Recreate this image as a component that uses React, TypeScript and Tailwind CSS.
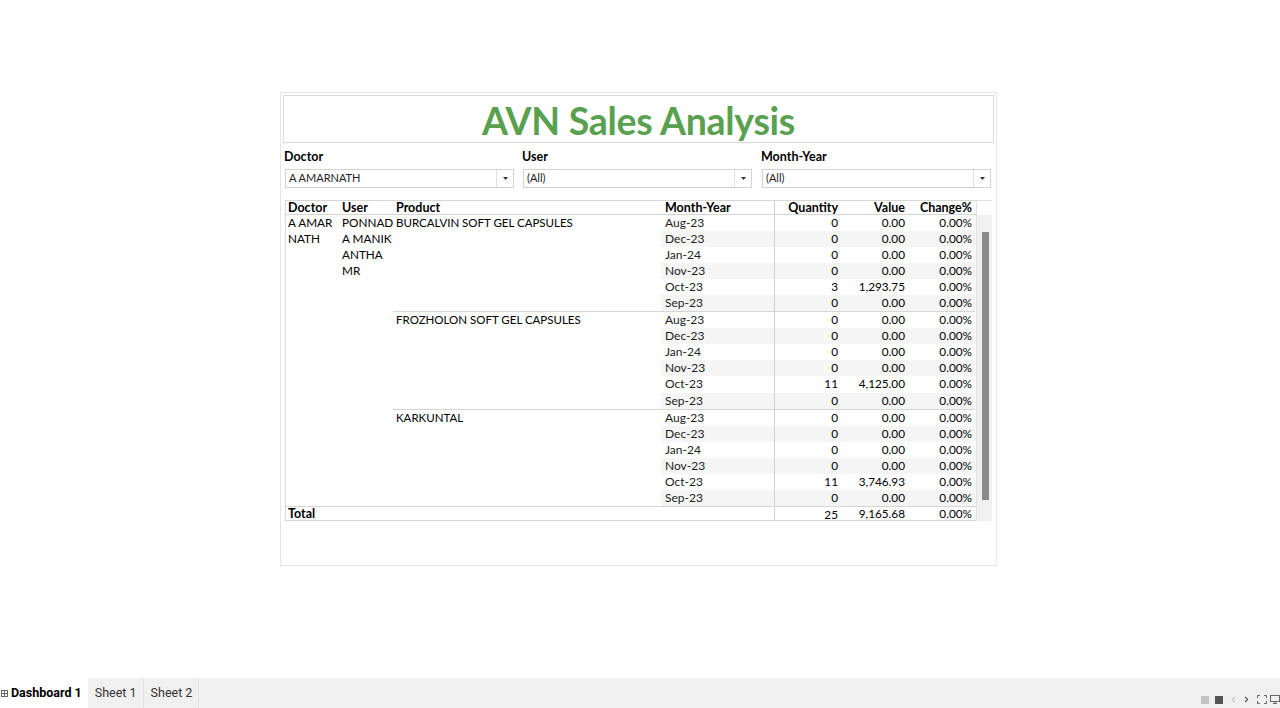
import { ChevronLeft, ChevronRight } from 'lucide-react';

const months = ['Aug-23', 'Dec-23', 'Jan-24', 'Nov-23', 'Oct-23', 'Sep-23'];

const products = [
  { name: 'BURCALVIN SOFT GEL CAPSULES', qty: [0, 0, 0, 0, 3, 0], value: ['0.00', '0.00', '0.00', '0.00', '1,293.75', '0.00'] },
  { name: 'FROZHOLON SOFT GEL CAPSULES', qty: [0, 0, 0, 0, 11, 0], value: ['0.00', '0.00', '0.00', '0.00', '4,125.00', '0.00'] },
  { name: 'KARKUNTAL', qty: [0, 0, 0, 0, 11, 0], value: ['0.00', '0.00', '0.00', '0.00', '3,746.93', '0.00'] },
];

function Filter({ label, value, width }: { label: string; value: string; width: string }) {
  return (
    <div className={`${width} shrink-0`}>
      <div className="h-[15px] pl-[1px] text-[12.5px] font-bold leading-[15px] text-black">{label}</div>
      <div className="ml-[2px] mt-[5px] flex h-[19px] w-[229px] items-center border border-[#d3d3d3] bg-white">
        <span className="flex-1 pl-[3px] text-[11px] text-[#222]">{value}</span>
        <div className="flex h-full w-[17px] items-center justify-center border-l border-[#e0e0e0]">
          <svg width="5" height="3" viewBox="0 0 5 3"><path d="M0 0h5L2.5 3z" fill="#333" /></svg>
        </div>
      </div>
    </div>
  );
}

export default function App() {
  return (
    <div className="flex h-[708px] flex-col bg-white font-['Lato','Liberation_Sans',sans-serif] text-black">
      <div className="flex-1 pt-[92px]">
        {/* DASHBOARD FRAME */}
        <div className="ml-[280px] h-[474px] w-[717px] border border-[#e6e6e6] p-[2px]">
          <div className="flex h-[48px] items-center justify-center border border-[#dadada]">
            <h1 className="pt-[4px] text-[37.5px] font-bold tracking-[-0.3px] text-[#59a14f]">AVN Sales Analysis</h1>
          </div>

          {/* FILTERS */}
          <div className="mt-[6px] flex">
            <Filter label="Doctor" value="A AMARNATH" width="w-[238px]" />
            <Filter label="User" value="(All)" width="w-[239px]" />
            <Filter label="Month-Year" value="(All)" width="w-[234px]" />
          </div>

          {/* TABLE */}
          <div className="ml-[2px] mt-[12px] flex w-[707px] text-[11.75px]">
            <div className="w-[691px] border-l border-t border-[#d6d6d6]">
              <div className="flex h-[14px] items-center border-b border-[#d6d6d6] text-[12.5px] font-bold leading-[14px]">
                <div className="w-[53px] pl-[2px]">Doctor</div>
                <div className="w-[54px] pl-[3px]">User</div>
                <div className="w-[268px] pl-[3px]">Product</div>
                <div className="w-[113px] pl-[4px]">Month-Year</div>
                <div className="h-full w-[67px] border-l border-[#cfcfcf] pr-[3px] text-right">Quantity</div>
                <div className="w-[67px] pr-[3px] text-right">Value</div>
                <div className="w-[67px] pr-[3px] text-right">Change%</div>
              </div>

              <div className="flex">
                <div className="w-[53px] whitespace-nowrap pl-[2px] leading-[16.1px]">
                  <div>A AMAR</div>
                  <div>NATH</div>
                </div>
                <div className="w-[54px] whitespace-nowrap pl-[3px] leading-[16.1px]">
                  <div>PONNAD</div>
                  <div>A MANIK</div>
                  <div>ANTHA</div>
                  <div>MR</div>
                </div>
                <div className="w-[582px]">
                  {products.map((p, gi) => (
                    <div key={p.name} className={`flex ${gi > 0 ? 'border-t border-[#d6d6d6]' : ''}`}>
                      <div className="w-[268px] pl-[3px] text-[11.5px] leading-[16px]">{p.name}</div>
                      <div className="w-[314px]">
                        {months.map((m, i) => (
                          <div
                            key={m}
                            className={`flex h-[16.05px] items-center leading-[16px] ${i % 2 === 1 ? 'bg-[#f5f5f5]' : ''}`}
                          >
                            <div className="w-[113px] pl-[4px] text-[12px] text-[#222]">{m}</div>
                            <div className="h-full w-[67px] border-l border-[#cfcfcf] pr-[3px] text-right">{p.qty[i]}</div>
                            <div className="w-[67px] pr-[3px] text-right">{p.value[i]}</div>
                            <div className="w-[67px] pr-[3px] text-right">0.00%</div>
                          </div>
                        ))}
                      </div>
                    </div>
                  ))}
                </div>
              </div>

              <div className="flex h-[15px] items-center border-b border-t border-[#d6d6d6] pt-[1px] leading-[14px]">
                <div className="w-[488px] pl-[2px] text-[12.5px] font-bold">Total</div>
                <div className="h-full w-[67px] border-l border-[#cfcfcf] pr-[3px] text-right">25</div>
                <div className="w-[67px] pr-[3px] text-right">9,165.68</div>
                <div className="w-[67px] pr-[3px] text-right">0.00%</div>
              </div>
            </div>

            {/* SCROLLBAR */}
            <div className="flex w-[16px] flex-col border-l border-t border-[#e2e2e2]">
              <div className="h-[14px] bg-white" />
              <div className="flex-1 bg-[#f0f0f0] pl-[5px] pt-[17px]">
                <div className="h-[268px] w-[7px] bg-[#8a8a8a]" />
              </div>
            </div>
          </div>
        </div>
      </div>

      {/* SHEET TABS */}
      <div className="flex h-[30px] items-center bg-[#f0f0f0] font-['Roboto',sans-serif] text-[12.5px]">
        <div className="flex h-full items-center gap-[3px] bg-white pl-[1px] pr-[6px]">
          <svg width="7" height="7" viewBox="0 0 7 7" className="text-[#666]">
            <rect x="0.5" y="0.5" width="6" height="6" fill="none" stroke="currentColor" />
            <path d="M3.5 0.5v6M0.5 3.5h6" stroke="currentColor" />
          </svg>
          <span className="font-bold text-black">Dashboard 1</span>
        </div>
        <div className="flex h-full items-center border-r border-[#e4e4e4] pl-[7px] pr-[6px] text-[#333]">Sheet 1</div>
        <div className="flex h-full items-center border-r border-[#e4e4e4] pl-[7px] pr-[6px] text-[#333]">Sheet 2</div>
        <div className="flex-1" />
        <div className="flex items-center pt-[13px]">
          <div className="h-[8px] w-[8px] bg-[#c4c4c4]" />
          <div className="ml-[6px] h-[8px] w-[8px] bg-[#555]" />
          <ChevronLeft size={9} className="ml-[6px] text-[#c4c4c4]" strokeWidth={3} />
          <ChevronRight size={9} className="ml-[4px] text-[#555]" strokeWidth={3} />
          <svg width="10" height="9" viewBox="0 0 10 9" fill="none" stroke="#666" className="ml-[6px]">
            <path d="M0.5 3V0.5H3M7 0.5h2.5V3M9.5 6v2.5H7M3 8.5H0.5V6" />
          </svg>
          <svg width="10" height="9" viewBox="0 0 10 9" fill="none" stroke="#666" className="ml-[3px]">
            <rect x="0.5" y="0.5" width="9" height="6" />
            <path d="M5 6.5v2M3 8.5h4" />
          </svg>
        </div>
      </div>
    </div>
  );
}
